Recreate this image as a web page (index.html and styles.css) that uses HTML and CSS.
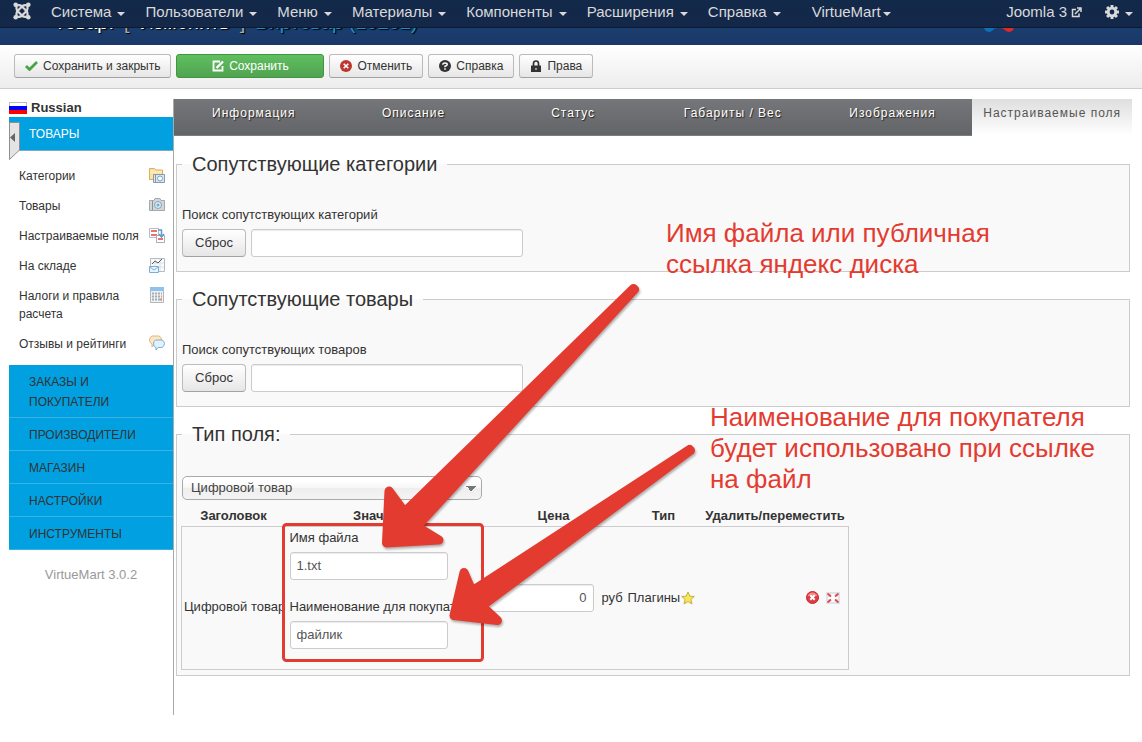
FILE: index.html
```html
<!DOCTYPE html>
<html lang="ru">
<head>
<meta charset="utf-8">
<title>Товар: Изменить</title>
<link rel="stylesheet" href="styles.css">
</head>
<body>
<nav class="navbar">
  <a class="brand" href="#" aria-label="Joomla">
    <svg width="18" height="18" viewBox="0 0 18 18" fill="none" stroke="#d9d9d9" stroke-width="2.200"><path d="M3.500 14V11.500Q3.500 10 5 8.500L9.500 4Q11.500 2.500 14 3.500"/><path d="M14.500 4V6.500Q14.500 8 13 9.500L8.500 14Q6.500 15.500 4 14.500"/><path d="M3.500 4V6.500Q3.500 8 5 9.500L9.500 14Q11.500 15.500 14 14.500"/><path d="M14.500 14V11.500Q14.500 10 13 8.500L8.500 4Q6.500 2.500 4 3.500"/><g fill="#d9d9d9" stroke="none"><circle cx="2.700" cy="2.700" r="2.300"/><circle cx="15.300" cy="2.700" r="2.300"/><circle cx="2.700" cy="15.300" r="2.300"/><circle cx="15.300" cy="15.300" r="2.300"/></g></svg>
  </a>
  <ul class="menu">
    <li><a href="#">Система <i class="caret"></i></a></li>
    <li><a href="#">Пользователи <i class="caret"></i></a></li>
    <li><a href="#">Меню <i class="caret"></i></a></li>
    <li><a href="#">Материалы <i class="caret"></i></a></li>
    <li><a href="#">Компоненты <i class="caret"></i></a></li>
    <li><a href="#">Расширения <i class="caret"></i></a></li>
    <li><a href="#">Справка <i class="caret"></i></a></li>
    <li class="vm"><a class="tight" href="#">VirtueMart<i class="caret"></i></a></li>
  </ul>
  <ul class="menu menu-right">
    <li><a class="site" href="#">Joomla 3 <svg width="11" height="11" viewBox="0 0 11 11" fill="none" stroke="#d9d9d9" stroke-width="1.500"><path d="M5 2.500H1.500V9.500H8V6.500M4 7L9 2M6 1H10V5"/></svg></a></li>
    <li><a href="#" aria-label="Настройки"><svg width="14" height="14" viewBox="0 0 14 14"><g fill="#d9d9d9"><path d="M5.500 0H8.500V14H5.500Z"/><path d="M0 5.500H14V8.500H0Z"/><path d="M1 3.100L3.100 1L13 10.900L10.900 13Z"/><path d="M10.900 1L13 3.100L3.100 13L1 10.900Z"/><circle cx="7" cy="7" r="5.200"/></g><circle cx="7" cy="7" r="2.400" fill="#13294a"/></svg><i class="caret"></i></a></li>
  </ul>
</nav>
<header class="header">
  <h1 class="page-title"><span>Товар:</span><span class="bracket">[</span><span>Изменить</span><span class="bracket">]</span><a href="#">Виртовар (10202)</a></h1>
  <svg class="logo" width="32" height="32" viewBox="0 0 32 32"><circle cx="6" cy="27" r="5" fill="#0d72b5"/><path d="M9 23H15V28Q12 28 9 30Z" fill="#0d72b5"/><circle cx="26" cy="27" r="5" fill="#e0282b"/><path d="M17 23H24V30H22Q20 28 17 28Z" fill="#e0282b"/></svg>
</header>
<div class="toolbar">
  <button class="btn"><svg width="13" height="10" viewBox="0 0 13 10"><path d="M1 5L4.500 8.500L12 1" fill="none" stroke="#46a546" stroke-width="2.800"/></svg>Сохранить и закрыть</button>
  <button class="btn btn-save"><svg width="12" height="12" viewBox="0 0 12 12" fill="none" stroke="#fff"><path d="M8 1.500H1.500V10.500H10.500V6" stroke-width="1.800"/><path d="M4.500 8L11 1.500" stroke-width="2.400"/></svg>Сохранить</button>
  <button class="btn"><svg width="12" height="12" viewBox="0 0 12 12"><circle cx="6" cy="6" r="6" fill="#bd362f"/><path d="M3.700 3.700L8.300 8.300M8.300 3.700L3.700 8.300" stroke="#fff" stroke-width="1.600"/></svg>Отменить</button>
  <button class="btn"><svg width="12" height="12" viewBox="0 0 12 12"><circle cx="6" cy="6" r="6" fill="#333"/><path d="M3.800 4.800Q3.800 3 6 3Q8.200 3 8.200 4.600Q8.200 5.600 6 6.300V7.300M6 8.200V9.800" fill="none" stroke="#fff" stroke-width="1.500"/></svg>Справка</button>
  <button class="btn"><svg width="12" height="12" viewBox="0 0 12 12"><path d="M1 5.500H11V12H1Z" fill="#333"/><path d="M3.500 6V3.500Q3.500 1 6 1Q8.500 1 8.500 3.500V6" fill="none" stroke="#333" stroke-width="1.700"/><path d="M5.500 8H6.500V10H5.500Z" fill="#fff"/></svg>Права</button>
</div>
<div class="layout">
  <aside class="sidebar">
    <div class="language"><svg width="18" height="12" viewBox="0 0 18 12"><path d="M0 0H18V12H0Z" fill="#bbb"/><path d="M1 1H17V4H1Z" fill="#fff"/><path d="M0 4H18V8H0Z" fill="#00f"/><path d="M0 8H18V12H0Z" fill="#f00"/></svg>Russian</div>
    <a class="group group-open" href="#">ТОВАРЫ</a>
    <button class="collapse" aria-label="Свернуть меню"><svg width="11" height="38" viewBox="0 0 11 38"><path d="M0 .5H10.500V28L.5 37.500V.5" fill="#e4e4e4" stroke="#8f8f8f"/><path d="M6 11V20L1 15.500Z" fill="#666"/></svg></button>
    <ul class="items">
      <li><a href="#">Категории</a><svg width="16" height="16" viewBox="0 0 16 16"><path d="M.5 12.500V1.500H5.500L7 3H13.500V12.500Z" fill="#fbe3a4" stroke="#d9ae5d"/><path d="M1 5H13" stroke="#fff2cf"/><path d="M4.500 7.500H15.500V15.500H4.500Z" fill="#dce4ec" stroke="#8d99a5"/><circle cx="11" cy="11.500" r="2.500" fill="#fff" stroke="#69a5d7"/><path d="M6.500 8V15" stroke="#8d99a5"/></svg></li>
      <li><a href="#">Товары</a><svg width="16" height="16" viewBox="0 0 16 16"><path d="M.5 3.500H5L6 1.500H11L12 3.500H15.500V13.500H.5Z" fill="#d2d6d9" stroke="#a3a8ac"/><path d="M3.500 4V13" stroke="#8c9297"/><circle cx="9" cy="8" r="3.500" fill="#d7edfc" stroke="#8ba1b1"/><circle cx="9" cy="8" r="1.500" fill="#77aace"/></svg></li>
      <li><a href="#">Настраиваемые поля</a><svg width="16" height="16" viewBox="0 0 16 16"><path d="M.5 1.500H9.500V10.500H.5Z" fill="#fff" stroke="#b5bcc3"/><path d="M2 4H8M2 8H8" stroke="#ed7071" stroke-width="2"/><path d="M7.500 8.500H15.500V15.500H7.500Z" fill="#fff" stroke="#a5afb8"/><path d="M9 12H14" stroke="#ed7071" stroke-width="2"/><path d="M9 3H12.500V9M10 7L12.500 10L15 7" fill="none" stroke="#5d9ccc" stroke-width="1.500"/></svg></li>
      <li><a href="#">На складе</a><svg width="16" height="16" viewBox="0 0 16 16"><path d="M1.500 1.500H15.500V14.500H1.500Z" fill="#f9fafb" stroke="#b3bbc2"/><path d="M2 6H15M2 10H15M6 2V14M11 2V14" stroke="#dbe1e6"/><path d="M3 7L6 4L9 6L13 2" fill="none" stroke="#565d63"/><path d="M.5 9.500H9.500V15.500H.5Z" fill="#e5f4ff" stroke="#7daed2"/><path d="M1 10L5 13L9 10" fill="none" stroke="#7daed2"/></svg></li>
      <li><a href="#">Налоги и правила расчета</a><svg width="16" height="16" viewBox="0 0 16 16"><path d="M1.500 .5H14.500V15.500H1.500Z" fill="#f0f1f2" stroke="#b1b8be"/><path d="M1 0H15V4H1Z" fill="#8fc1ea"/><path d="M3 6.500H13M3 9.500H13M3 12.500H13" stroke="#a5acb2" stroke-width="2" stroke-dasharray="2 1"/><path d="M11 11.500H13V13.500H11Z" fill="#e78b61"/></svg></li>
      <li><a href="#">Отзывы и рейтинги</a><svg width="16" height="16" viewBox="0 0 16 16"><path d="M3 1H10Q12.500 2 12.500 5Q12 8 10 9H5L3 12V9Q.5 8 .5 5Q.5 2 3 1Z" fill="#fde7c8" stroke="#e9b477"/><path d="M6.500 5H13Q15.500 6 15.500 8.500Q15.500 11 13 12.500H9L7 15V12.500Q4.500 12 4.500 9Q4.500 6 6.500 5Z" fill="#e0f2fe" stroke="#7bafd6"/></svg></li>
    </ul>
    <a class="group" href="#">ЗАКАЗЫ И ПОКУПАТЕЛИ</a>
    <a class="group" href="#">ПРОИЗВОДИТЕЛИ</a>
    <a class="group" href="#">МАГАЗИН</a>
    <a class="group" href="#">НАСТРОЙКИ</a>
    <a class="group" href="#">ИНСТРУМЕНТЫ</a>
    <p class="version">VirtueMart 3.0.2</p>
  </aside>
  <main class="content">
    <nav class="tabs">
      <a href="#">Информация</a><a href="#">Описание</a><a href="#">Статус</a><a href="#">Габариты / Вес</a><a href="#">Изображения</a><a class="active" href="#">Настраиваемые поля</a>
    </nav>
    <fieldset class="panel">
      <legend>Сопутствующие категории</legend>
      <label for="cats">Поиск сопутствующих категорий</label>
      <div class="search"><button class="reset">Сброс</button><input class="field" id="cats" type="text"></div>
    </fieldset>
    <fieldset class="panel">
      <legend>Сопутствующие товары</legend>
      <label for="prods">Поиск сопутствующих товаров</label>
      <div class="search"><button class="reset">Сброс</button><input class="field" id="prods" type="text"></div>
    </fieldset>
    <fieldset class="panel panel-type">
      <legend>Тип поля:</legend>
      <select class="select" aria-label="Тип поля"><option>Цифровой товар</option></select>
      <table class="fields">
        <colgroup><col class="c-title"><col class="c-value"><col class="c-price"><col class="c-type"><col class="c-move"></colgroup>
        <thead><tr><th>Заголовок</th><th>Значение</th><th>Цена</th><th>Тип</th><th>Удалить/переместить</th></tr></thead>
        <tbody>
          <tr>
            <td class="title">Цифровой товар</td>
            <td class="value">
              <label for="file">Имя файла</label><input class="field" id="file" type="text" value="1.txt">
              <label for="name">Наименование для покупателя</label><input class="field" id="name" type="text" value="файлик">
            </td>
            <td><div class="price"><input class="field" type="text" value="0" aria-label="Цена"><span>руб</span></div></td>
            <td><div class="kind">Плагины<svg width="14" height="14" viewBox="0 0 14 14"><path d="M7 1L8.800 5.200L13.300 5.500L9.900 8.400L11 13L7 10.500L3 13L4.100 8.400L.7 5.500L5.200 5.200Z" fill="#f7e75b" stroke="#c9ae3c"/></svg></div></td>
            <td><div class="actions"><svg width="13" height="13" viewBox="0 0 13 13"><circle cx="6.500" cy="6.500" r="6" fill="#e03c42" stroke="#c6262e"/><path d="M1.500 5Q3 1.500 6.500 1.500T11.500 5Z" fill="#f08a8d"/><path d="M4.300 4.300L8.700 8.700M8.700 4.300L4.300 8.700" stroke="#fff" stroke-width="2"/></svg><svg width="14" height="12" viewBox="0 0 14 12"><path d="M0 0H14V12H0Z" fill="#dfe3ea"/><path d="M5 2H9V10H5Z M2 5H12V7H2Z" fill="#fff"/><path d="M1.500 1.500L5 4.500M12.500 1.500L9 4.500M1.500 10.500L5 7.500M12.500 10.500L9 7.500" stroke="#e5484b" stroke-width="1.800"/></svg></div></td>
          </tr>
        </tbody>
      </table>
    </fieldset>
  </main>
</div>
<div class="notes">
  <svg class="arrows" width="1142" height="742" viewBox="0 0 1142 742">
    <rect x="283.500" y="524.500" width="199" height="136" rx="3" fill="none" stroke="#e43b30" stroke-width="3"/>
    <g fill="#e43b30" stroke="#e43b30" stroke-width="9" stroke-linejoin="round">
      <path d="M633.500 288.500L404.500 512L389 491L386.500 543L439 540L417 526.500L634.500 289.500Z"/>
      <path d="M689.500 449.500L472 591L464 572.500L454 615.500L497.500 620.500L482 606L690.500 450.500Z"/>
    </g>
  </svg>
  <p class="note note-file">Имя файла или публичная<br>ссылка яндекс диска</p>
  <p class="note note-name">Наименование для покупателя<br>будет использовано при ссылке<br>на файл</p>
</div>
</body>
</html>
```
FILE: styles.css
```css
* { box-sizing: border-box; }
body {
  margin: 0;
  position: relative;
  min-height: 100vh;
  background: #fff;
  color: #333;
  font: 13px/18px "Liberation Sans", Arial, sans-serif;
}
a { color: inherit; text-decoration: none; }
ul { list-style: none; margin: 0; padding: 0; }
button, input, select { font: inherit; color: inherit; margin: 0; }
svg { flex: none; }

.navbar {
  position: relative;
  z-index: 1;
  display: flex;
  height: 28px;
  padding: 0 9px 0 13px;
  border-bottom: 1px solid #0b1a32;
  background: linear-gradient(#13294a, #142849);
  color: #d9d9d9;
  font-size: 15px;
  line-height: 24px;
}
.brand { padding-top: 2px; margin-right: 20px; }
.brand svg { display: block; }
.menu { display: flex; gap: 20px; }
.menu a { display: flex; align-items: center; gap: 6px; height: 24px; white-space: nowrap; }
.menu a.tight { gap: 2px; }
.menu .vm { margin-left: 11px; }
.menu-right { margin-left: auto; gap: 23px; }
.menu a.site { gap: 4px; }
.caret {
  margin-top: 3px;
  border: 4px solid transparent;
  border-top-color: #d9d9d9;
  border-bottom: 0;
}

.header {
  display: flex;
  justify-content: space-between;
  align-items: flex-end;
  height: 17px;
  padding: 0 127px 13px 54px;
  background: linear-gradient(#1a3e6e, #1a3867);
}
.page-title {
  display: flex;
  gap: 10px;
  margin: 0;
  color: #fff;
  font-size: 20px;
  font-weight: normal;
  line-height: 20px;
  text-shadow: 1px 1px 1px #000;
}
.page-title a { color: #1a8fd0; }
.page-title .bracket { color: #aaa; }

.toolbar {
  display: flex;
  gap: 5px;
  padding: 9px 14px 10px;
  border-bottom: 1px solid #cdcdcd;
  background: linear-gradient(#fff, #ededed);
}
.btn {
  display: flex;
  align-items: center;
  justify-content: center;
  gap: 5px;
  height: 24px;
  padding: 0 10px;
  border: 1px solid #bbb;
  border-bottom-color: #a2a2a2;
  border-radius: 3px;
  background: linear-gradient(#fff, #e6e6e6);
  font-size: 12px;
}
.btn-save {
  width: 148px;
  border-color: #3f963f;
  background: linear-gradient(#5fbf5f, #51a351);
  color: #fff;
}

.layout { display: flex; padding: 10px 10px 27px 9px; }
.sidebar {
  position: relative;
  width: 165px;
  min-height: 616px;
  flex: none;
  border-right: 1px solid #aaa;
}
.language { display: flex; align-items: center; gap: 4px; height: 18px; font-weight: bold; }
.group {
  display: block;
  padding: 7px 50px 5px 20px;
  border-bottom: 1px solid #3bb0e3;
  background: #00a0e1;
  font-size: 12px;
  line-height: 20px;
}
.group-open { padding-bottom: 6px; border-color: #82a7c4; color: #fff; }
.collapse { position: absolute; left: 0; top: 23px; padding: 0; border: 0; background: none; }
.collapse svg { display: block; }
.items { padding: 10px 8px 6px 10px; font-size: 12px; }
.items li { display: flex; justify-content: space-between; padding: 6px 0; }
.version { margin: 15px 0 0; color: #999; font-size: 13px; line-height: 20px; text-align: center; }

.content { flex: 1; min-width: 0; }
.tabs {
  display: grid;
  grid-template-columns: repeat(6, 1fr);
  margin-bottom: 8px;
  text-align: center;
}
.tabs a {
  height: 37px;
  padding-top: 5px;
  border-bottom: 1px solid #7c7d81;
  background: linear-gradient(#757679, #636468);
  color: #fff;
  font-size: 12px;
  letter-spacing: 1px;
  text-shadow: 1px 1px 1px #222;
  white-space: nowrap;
}
.tabs a.active { border-color: #fff; background: linear-gradient(#dedede, #fff); color: #555; text-shadow: none; }

.panel {
  min-width: 0;
  margin: 0 2px 7px;
  padding: 0 5px 14px;
  border: 1px solid #ccc;
  background: #f9f9f9;
}
.panel legend { padding: 0 10px; margin-bottom: 22px; font-size: 20px; line-height: 40px; }
.panel label { display: block; }
.search { display: flex; gap: 5px; margin-top: 5px; }
.reset {
  width: 64px;
  height: 28px;
  border: 1px solid #bbb;
  border-bottom-color: #a2a2a2;
  border-radius: 4px;
  background: linear-gradient(#fff, #e6e6e6);
}
.field {
  height: 28px;
  padding: 4px 6px;
  border: 1px solid #ccc;
  border-radius: 3px;
  background: #fff;
  box-shadow: inset 0 1px 1px rgba(0, 0, 0, .08);
  color: #555;
}
.search .field { width: 272px; }
.panel-type { padding: 0 5px 5px 4px; }
.panel-type legend { margin-left: 1px; }
.select {
  display: block;
  width: 300px;
  height: 24px;
  margin-left: 1px;
  padding: 0 8px;
  appearance: none;
  border: 1px solid #aaa;
  border-radius: 5px;
  background:
    linear-gradient(45deg, transparent 50%, #777 50%) right 10px center / 5px 5px no-repeat,
    linear-gradient(315deg, transparent 50%, #777 50%) right 5px center / 5px 5px no-repeat,
    linear-gradient(#fff 20%, #f6f6f6 50%, #eee 52%, #f4f4f4);
  color: #444;
}
.fields { width: 667px; max-width: 100%; table-layout: fixed; border-collapse: collapse; }
.c-title { width: 104px; }
.c-value { width: 196px; }
.c-price { width: 144px; }
.c-type { width: 76px; }
.c-move { width: 147px; }
.fields th { height: 26px; padding: 6px 0 0; white-space: nowrap; }
.fields tbody { border: 1px solid #ccc; }
.fields td { padding: 0; white-space: nowrap; }
.fields .title { padding: 18px 2px 0; }
.fields .value { padding: 2px 0 20px 4px; }
.value .field { display: block; width: 158px; margin: 5px 0 18px; }
.value .field:last-child { margin-bottom: 0; }
.price { display: flex; align-items: center; gap: 8px; }
.price .field { width: 112px; text-align: right; }
.kind, .actions { display: flex; align-items: center; }
.kind { gap: 1px; padding-left: 2px; }
.actions { justify-content: flex-end; gap: 7px; padding-right: 8px; }

.notes { position: absolute; inset: 0; overflow: hidden; pointer-events: none; }
.arrows { position: absolute; left: 0; top: 0; }
.arrows g { filter: drop-shadow(1px 2px 1px rgba(0, 0, 0, .3)); }
.note { position: absolute; margin: 0; color: #e43b30; font-size: 26px; line-height: 31px; white-space: nowrap; }
.note-file { left: 666px; top: 218px; }
.note-name { left: 710px; top: 402px; }
```
